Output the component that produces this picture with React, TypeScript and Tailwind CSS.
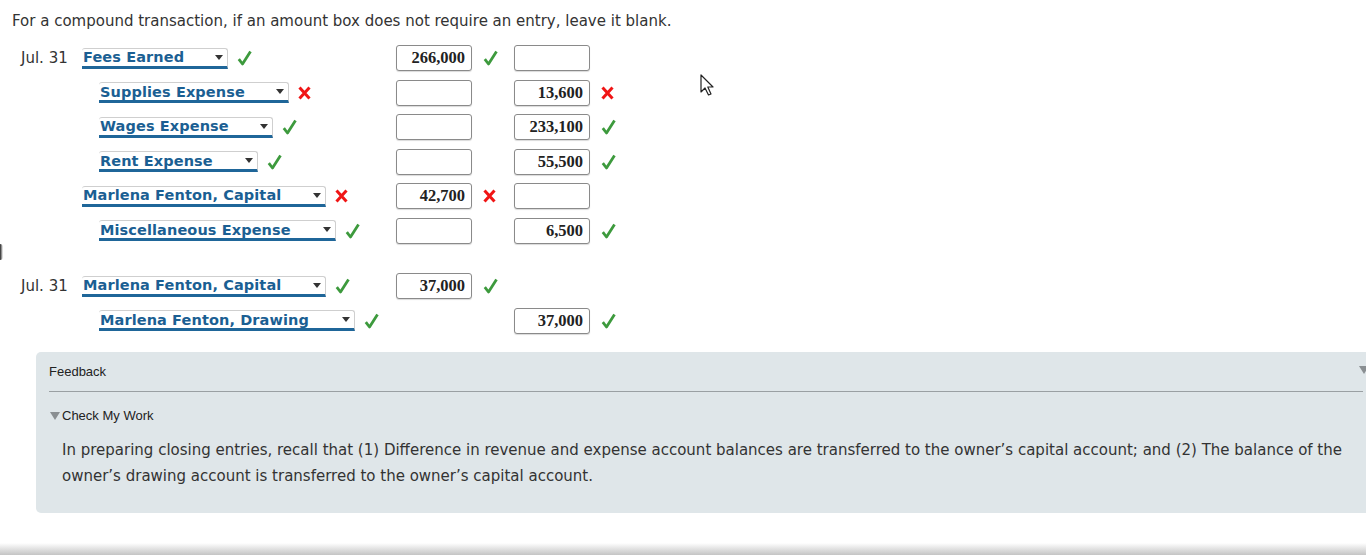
import React from 'react'

type Mark = 'ok' | 'bad' | null

type Row = {
  date?: string
  account: string
  indent: boolean
  selectW: string
  mark: Mark
  debit?: string
  debitMark?: Mark
  credit?: string | null
  creditMark?: Mark
}

const entry1: Row[] = [
  { date: 'Jul. 31', account: 'Fees Earned', indent: false, selectW: 'w-[146px]', mark: 'ok', debit: '266,000', debitMark: 'ok', credit: '' },
  { account: 'Supplies Expense', indent: true, selectW: 'w-[190px]', mark: 'bad', debit: '', credit: '13,600', creditMark: 'bad' },
  { account: 'Wages Expense', indent: true, selectW: 'w-[174px]', mark: 'ok', debit: '', credit: '233,100', creditMark: 'ok' },
  { account: 'Rent Expense', indent: true, selectW: 'w-[159px]', mark: 'ok', debit: '', credit: '55,500', creditMark: 'ok' },
  { account: 'Marlena Fenton, Capital', indent: false, selectW: 'w-[244px]', mark: 'bad', debit: '42,700', debitMark: 'bad', credit: '' },
  { account: 'Miscellaneous Expense', indent: true, selectW: 'w-[237px]', mark: 'ok', debit: '', credit: '6,500', creditMark: 'ok' },
]

const entry2: Row[] = [
  { date: 'Jul. 31', account: 'Marlena Fenton, Capital', indent: false, selectW: 'w-[244px]', mark: 'ok', debit: '37,000', debitMark: 'ok', credit: null },
  { account: 'Marlena Fenton, Drawing', indent: true, selectW: 'w-[256px]', mark: 'ok', credit: '37,000', creditMark: 'ok' },
]

const Check = () => (
  <svg width="15" height="16" viewBox="0 0 15 16" className="shrink-0">
    <path d="M1.8 9.2 L5.5 14 L13.5 1.5" fill="none" stroke="#3d9a3d" strokeWidth="2.8" strokeLinejoin="round" />
  </svg>
)

const Cross = () => (
  <svg width="13" height="14" viewBox="0 0 13 14" className="shrink-0">
    <path d="M1.5 1.5 L11.5 12.5 M11.5 1.5 L1.5 12.5" stroke="#f01515" strokeWidth="3" />
  </svg>
)

const MarkIcon = ({ mark }: { mark?: Mark }) => {
  if (mark === 'ok') return <Check />
  if (mark === 'bad') return <Cross />
  return null
}

const AccountSelect = ({ label, width }: { label: string; width: string }) => (
  <div
    className={`${width} h-[21px] flex items-center justify-between bg-white rounded-t-[3px] border-t border-r border-[#cfcfcf] border-b-[3px] border-b-[#1f6699] pl-[1px] pr-[4px]`}
  >
    <span className="text-[#1b5f93] font-bold text-[14.5px] leading-none tracking-[0.1px] whitespace-nowrap">{label}</span>
    <svg width="8" height="5" viewBox="0 0 8 5">
      <path d="M0 0 H8 L4 5 Z" fill="#333" />
    </svg>
  </div>
)

const AmountBox = ({ value }: { value?: string | null }) => {
  if (value === undefined || value === null) return <div className="w-[76px]" />
  return (
    <div className="w-[76px] h-[26px] border border-[#8a8a8a] rounded-[3px] bg-white flex items-center justify-end pr-[6px] shadow-[0_1px_1px_rgba(0,0,0,0.15)]">
      <span className="font-['Liberation_Serif',serif] font-bold text-[16.5px] leading-none text-[#222]">{value}</span>
    </div>
  )
}

const EntryRow = ({ row }: { row: Row }) => (
  <div className="flex items-center h-[34.5px]">
    <div className="w-[61px] text-[15px] text-[#333]">{row.date}</div>
    <div className="w-[314px] flex items-center">
      <div className={row.indent ? 'w-[17px]' : 'w-0'} />
      <AccountSelect label={row.account} width={row.selectW} />
      <div className="w-[9px]" />
      <MarkIcon mark={row.mark} />
    </div>
    <AmountBox value={row.debit} />
    <div className="w-[42px] pl-[11px] flex items-center">
      <MarkIcon mark={row.debitMark} />
    </div>
    <AmountBox value={row.credit} />
    <div className="pl-[11px] flex items-center">
      <MarkIcon mark={row.creditMark} />
    </div>
  </div>
)

export default function App() {
  return (
    <div className="relative w-[1366px] h-[555px] overflow-hidden bg-white font-['DejaVu_Sans',Verdana,sans-serif] text-[#333]">
      <p className="pl-[12px] pt-[12px] text-[15px] leading-[18px]">
        For a compound transaction, if an amount box does not require an entry, leave it blank.
      </p>

      <div className="pl-[21px] mt-[11px]">
        {entry1.map((r, i) => (
          <EntryRow key={i} row={r} />
        ))}
        <div className="h-[21px]" />
        {entry2.map((r, i) => (
          <EntryRow key={i} row={r} />
        ))}
      </div>

      <div className="ml-[36px] mt-[14px] w-[1340px] h-[161px] bg-[#dfe6e9] rounded-[5px] font-['Liberation_Sans',Arial,sans-serif]">
        <div className="mx-[13px] h-[40px] flex items-center justify-between border-b border-[#9aa0a3] pt-[1px]">
          <span className="text-[13px] text-[#222]">Feedback</span>
          <svg width="10" height="8" viewBox="0 0 10 8" className="mr-[-6px] mb-[4px]">
            <path d="M0 0 H10 L5 8 Z" fill="#8a8f92" />
          </svg>
        </div>
        <div className="ml-[14px] mt-[14px] flex items-center gap-[2px] text-[13px] text-[#222]">
          <svg width="10" height="8" viewBox="0 0 10 8">
            <path d="M0 0 H10 L5 8 Z" fill="#8a8f92" />
          </svg>
          <span>Check My Work</span>
        </div>
        <p className="ml-[26px] mr-[14px] mt-[11px] text-[15px] leading-[26px] text-[#333] font-['DejaVu_Sans',Verdana,sans-serif]">
          In preparing closing entries, recall that (1) Difference in revenue and expense account balances are transferred to the owner’s capital account; and (2) The balance of the owner’s drawing account is transferred to the owner’s capital account.
        </p>
      </div>

      {/* window shadow at the bottom */}
      <div className="absolute left-0 right-0 bottom-0 h-[12px] bg-gradient-to-b from-white to-[#c4c4c4]" />

      {/* sliver at the left edge */}
      <div className="absolute left-0 top-[244px] w-[3px] h-[16px] rounded-r-full bg-gradient-to-r from-[#222] to-transparent" />

      {/* mouse pointer */}
      <svg className="absolute left-[700px] top-[74px]" width="18" height="24" viewBox="0 0 18 24">
        <path d="M1 1 V18 L5 14 L8.5 21 L11 20 L7.8 13 H13 Z" fill="white" stroke="#222" strokeWidth="1.2" strokeLinejoin="round" />
      </svg>
    </div>
  )
}
